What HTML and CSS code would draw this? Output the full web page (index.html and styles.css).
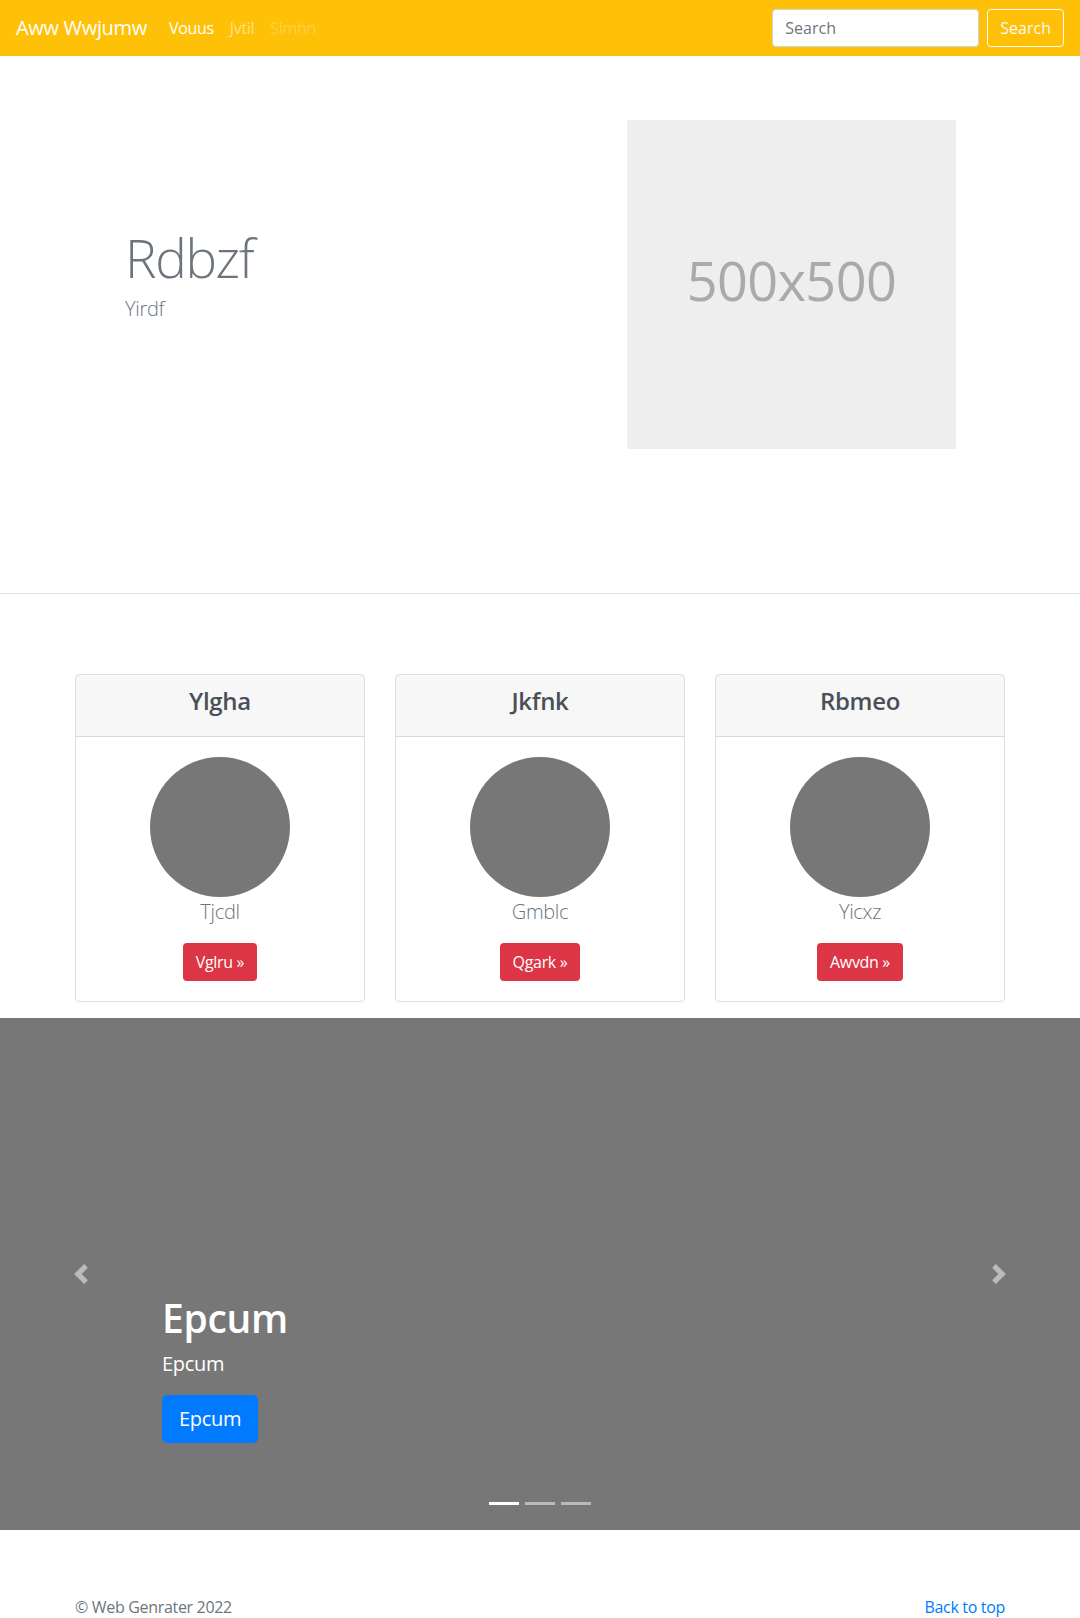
FILE: index.html
```html
<!DOCTYPE html>
<html lang="en">
<head>
<meta charset="utf-8">
<title>Aww Wwjumw</title>
<link rel="stylesheet" href="styles.css">
</head>
<body>
<header class="navbar">
  <a class="brand" href="#">Aww Wwjumw</a>
  <nav class="nav-links">
    <a class="nav-link active" href="#">Vouus</a>
    <a class="nav-link" href="#">Jvtil</a>
    <a class="nav-link disabled" href="#">Slmhn</a>
  </nav>
  <form class="search">
    <input class="search-input" type="text" placeholder="Search">
    <button class="search-btn" type="button">Search</button>
  </form>
</header>

<section class="hero">
  <div class="hero-text">
    <h1 class="display">Rdbzf</h1>
    <p class="lead">Yirdf</p>
  </div>
  <div class="hero-media">
    <div class="placeholder">500x500</div>
  </div>
</section>

<section class="cards">
  <div class="card">
    <div class="card-header"><h4>Ylgha</h4></div>
    <div class="card-body">
      <div class="avatar"></div>
      <p class="lead">Tjcdl</p>
      <a class="btn btn-red" href="#">Vglru &raquo;</a>
    </div>
  </div>
  <div class="card">
    <div class="card-header"><h4>Jkfnk</h4></div>
    <div class="card-body">
      <div class="avatar"></div>
      <p class="lead">Gmblc</p>
      <a class="btn btn-red" href="#">Qgark &raquo;</a>
    </div>
  </div>
  <div class="card">
    <div class="card-header"><h4>Rbmeo</h4></div>
    <div class="card-body">
      <div class="avatar"></div>
      <p class="lead">Yicxz</p>
      <a class="btn btn-red" href="#">Awvdn &raquo;</a>
    </div>
  </div>
</section>

<section class="carousel">
  <a class="control prev" href="#">
    <svg viewBox="0 0 8 8" width="20" height="20"><path d="M5.25 0l-4 4 4 4 1.5-1.5L4.25 4l2.5-2.5L5.25 0z"/></svg>
  </a>
  <div class="caption">
    <h1>Epcum</h1>
    <p>Epcum</p>
    <p><a class="btn btn-lg btn-blue" href="#">Epcum</a></p>
  </div>
  <a class="control next" href="#">
    <svg viewBox="0 0 8 8" width="20" height="20"><path d="M2.75 0l-1.5 1.5L3.75 4l-2.5 2.5L2.75 8l4-4-4-4z"/></svg>
  </a>
  <ol class="indicators">
    <li class="on"></li>
    <li></li>
    <li></li>
  </ol>
</section>

<footer class="footer">
  <p class="copy">&copy; Web Genrater 2022</p>
  <a class="top-link" href="#">Back to top</a>
</footer>
</body>
</html>
```

FILE: styles.css
```css
* { box-sizing: border-box; }
body {
  margin: 0;
  font-family: "Open Sans", "Noto Sans", sans-serif;
  font-size: 16px;
  line-height: 1.5;
  color: #212529;
  background: #fff;
  letter-spacing: -0.02em;
}
a { text-decoration: none; }

/* navbar */
.navbar {
  height: 56px;
  background: #ffc107;
  display: flex;
  align-items: center;
  padding: 0 16px;
}
.brand {
  color: #fff;
  font-size: 20px;
  margin-right: 14px;
}
.nav-links { display: flex; flex: 1; }
.nav-link {
  padding: 8px;
  color: rgba(255,255,255,.5);
}
.nav-link.active { color: #fff; }
.nav-link.disabled { color: rgba(255,255,255,.25); }
.search { display: flex; align-items: center; }
.search-input {
  width: 207px;
  height: 38px;
  padding: 6px 12px;
  font: inherit;
  font-size: 16px;
  border: 1px solid #ced4da;
  border-radius: 4px;
  margin-right: 8px;
  color: #495057;
}
.search-input::placeholder { color: #6c757d; }
.search-btn {
  height: 38px;
  padding: 6px 12px;
  font: inherit;
  font-size: 16px;
  color: #f8f9fa;
  background: transparent;
  border: 1px solid #f8f9fa;
  border-radius: 4px;
}

/* hero */
.hero {
  display: flex;
  align-items: center;
  padding: 64px 0 144px;
  border-bottom: 1px solid #dee2e6;
}
.hero-text {
  width: 540px;
  padding-left: 125px;
  margin-top: -8px;
}
.display {
  margin: 0;
  font-size: 53px;
  font-weight: 300;
  line-height: 72px;
  letter-spacing: -0.025em;
  color: #6c757d;
}
.lead {
  font-size: 20px;
  font-weight: 300;
  color: #6c757d;
  margin: 0 0 16px;
}
.hero-media { padding-left: 87px; }
.placeholder {
  width: 329px;
  height: 329px;
  background: #eee;
  color: #aaa;
  font-size: 54px;
  letter-spacing: -0.01em;
  padding-bottom: 8px;
  display: flex;
  align-items: center;
  justify-content: center;
}

/* cards */
.cards {
  width: 960px;
  margin: 80px auto 16px;
  display: grid;
  grid-template-columns: repeat(3, 1fr);
  column-gap: 30px;
  padding: 0 15px;
}
.card {
  border: 1px solid rgba(0,0,0,.125);
  border-radius: 4px;
  text-align: center;
}
.card-header {
  background: rgba(0,0,0,.03);
  border-bottom: 1px solid rgba(0,0,0,.125);
  padding: 12px 20px;
}
.card-header h4 {
  margin: 0 0 8px;
  font-size: 24px;
  font-weight: 600;
  line-height: 1.2;
  color: #495057;
}
.card-body { padding: 20px; }
.avatar {
  width: 140px;
  height: 140px;
  border-radius: 50%;
  background: #777;
  margin: 0 auto;
}
.btn {
  display: inline-block;
  padding: 6px 12px;
  font-size: 16px;
  line-height: 24px;
  border: 1px solid transparent;
  border-radius: 4px;
  color: #fff;
}
.btn-red { background: #dc3545; }
.btn-lg {
  padding: 8px 16px;
  font-size: 20px;
  line-height: 30px;
  border-radius: 5px;
}
.btn-blue { background: #007bff; }

/* carousel */
.carousel {
  position: relative;
  height: 512px;
  background: #777;
  display: flex;
  align-items: flex-end;
}
.caption {
  flex: 1;
  padding: 20px 0 20px;
  margin: 0 162px 51px;
  color: #fff;
}
.caption h1 {
  margin: 0 0 7px;
  font-size: 39px;
  font-weight: 600;
  line-height: 1.2;
}
.caption p {
  margin: 0 0 16px;
  font-size: 20px;
}
.control {
  position: absolute;
  top: 0;
  bottom: 0;
  width: 162px;
  display: flex;
  align-items: center;
  justify-content: center;
  fill: #fff;
  opacity: .5;
}
.control.prev { left: 0; }
.control.next { right: 0; }
.indicators {
  position: absolute;
  left: 0;
  right: 0;
  bottom: 25px;
  margin: 0;
  padding: 0;
  list-style: none;
  display: flex;
  justify-content: center;
  gap: 6px;
}
.indicators li {
  width: 30px;
  height: 3px;
  background: rgba(255,255,255,.5);
}
.indicators li.on { background: #fff; }

/* footer */
.footer {
  width: 960px;
  margin: 0 auto;
  padding: 65px 15px 0;
  display: flex;
  justify-content: space-between;
}
.copy { margin: 0; color: #6c757d; }
.top-link { color: #007bff; }
```
